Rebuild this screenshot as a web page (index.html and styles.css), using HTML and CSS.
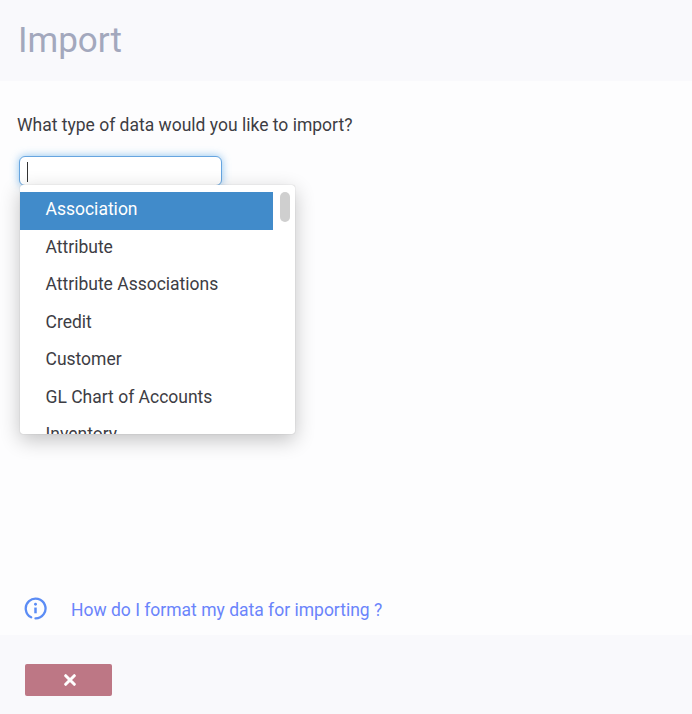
FILE: index.html
```html
<!DOCTYPE html>
<html lang="en">
<head>
<meta charset="utf-8">
<title>Import</title>
<link rel="stylesheet" href="styles.css">
</head>
<body>
<div class="page">
  <header class="header"><h1 class="title">Import</h1></header>
  <main class="content">
    <p class="question">What type of data would you like to import?</p>
    <div class="select">
      <div class="input"><span class="caret"></span></div>
      <div class="dropdown">
        <ul class="list">
          <li class="option active">Association</li>
          <li class="option">Attribute</li>
          <li class="option">Attribute Associations</li>
          <li class="option">Credit</li>
          <li class="option">Customer</li>
          <li class="option">GL Chart of Accounts</li>
          <li class="option">Inventory</li>
        </ul>
        <div class="track"><div class="thumb"></div></div>
      </div>
    </div>
    <div class="help">
      <svg class="info" width="24" height="24" viewBox="0 0 24 24" fill="none" stroke="#5b8cf5" stroke-width="2.4" stroke-linecap="round">
        <path d="M7.5 21.2A10.3 10.3 0 1 1 12 22.3"/>
        <path d="M12 11v6" stroke-width="2.6" stroke-linecap="butt"/>
        <circle cx="12" cy="7.6" r="1.5" fill="#5b8cf5" stroke="none"/>
      </svg>
      <a class="help-link" href="#">How do I format my data for importing ?</a>
    </div>
  </main>
  <footer class="footer">
    <button class="cancel" type="button" aria-label="Close">
      <svg width="12" height="12" viewBox="0 0 12 12" stroke="#fff" stroke-width="3" stroke-linecap="round"><path d="M1.7 1.7l8.6 8.6M10.3 1.7l-8.6 8.6"/></svg>
    </button>
  </footer>
</div>
</body>
</html>
```
FILE: styles.css
```css
* { box-sizing: border-box; }
html, body { margin: 0; padding: 0; }
body { font-family: Roboto, "Liberation Sans", sans-serif; background: #fdfdfe; color: #3d3d44; }
.page { width: 692px; height: 714px; display: flex; flex-direction: column; overflow: hidden; }
.header { height: 81px; background: #f9f9fc; padding: 17px 18px 0; flex: none; }
.title { margin: 0; font-size: 35px; font-weight: 400; line-height: 48px; color: #a3a8bd; }
.content { flex: 1; padding: 33px 17px 0; display: flex; flex-direction: column; min-height: 0; }
.question { margin: 0; font-size: 17.5px; line-height: 22px; color: #3d3d44; }
.select { position: relative; margin: 20px 0 0 2px; width: 203px; height: 30px; flex: none; }
.input { width: 203px; height: 30px; background: #fff; border: 1px solid #66a5e0; border-radius: 6px; box-shadow: 0 0 8px rgba(102,175,233,.75); padding: 5px 7px; }
.caret { display: block; width: 1px; height: 20px; background: #333; }
.dropdown { position: absolute; left: 1px; top: 29px; width: 275px; height: 249px; background: #fff; border-radius: 3px; box-shadow: 0 0 1px rgba(0,0,0,.3), 0 6px 20px rgba(0,0,0,.24); overflow: hidden; padding-top: 7px; display: flex; z-index: 2; }
.list { list-style: none; margin: 0; padding: 0; width: 253px; flex: none; }
.option { height: 37.5px; padding: 0 25.5px; font-size: 17.5px; line-height: 35px; color: #3d3d44; white-space: nowrap; }
.active { background: #418bca; color: #fff; }
.track { flex: 1; padding: 0 6px 0 7px; }
.thumb { width: 10px; height: 30px; background: #cfcfcf; border-radius: 5px; }
.help { margin-top: auto; height: 38px; padding: 0 0 0 7px; display: flex; gap: 24px; align-items: flex-start; }
.info { flex: none; width: 23px; height: 23px; }
.help-link { margin-top: 1px; font-size: 17.5px; line-height: 24px; color: #6a84fb; text-decoration: none; white-space: nowrap; }
.footer { height: 79px; background: #f9f9fc; flex: none; padding: 29px 25px 0; }
.cancel { display: flex; align-items: center; justify-content: center; width: 87px; height: 32px; padding: 0 0 0 2px; border: 0; border-radius: 2px; background: #bd7785; }
```
